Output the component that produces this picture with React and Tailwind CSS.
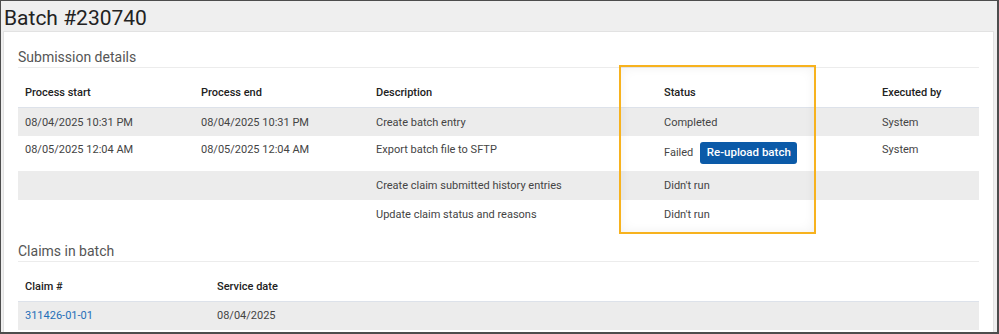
import React from 'react';

const steps = [
    { start: '08/04/2025 10:31 PM', end: '08/04/2025 10:31 PM', desc: 'Create batch entry', status: 'Completed', by: 'System' },
    { start: '08/05/2025 12:04 AM', end: '08/05/2025 12:04 AM', desc: 'Export batch file to SFTP', status: 'Failed', by: 'System', retry: true },
    { start: '', end: '', desc: 'Create claim submitted history entries', status: "Didn't run", by: '' },
    { start: '', end: '', desc: 'Update claim status and reasons', status: "Didn't run", by: '' },
];

function SectionTitle({ children }) {
    return (
        <div className="text-[14px] text-[#555] border-b border-[#ececec] pb-[2px] leading-[16px]">{children}</div>
    );
}

export default function App() {
    return (
        <div className="w-[999px] h-[334px] bg-[#efefef] border-l border-t border-r-2 border-b-2 border-[#4d4d4d] flex flex-col overflow-hidden font-['Roboto',sans-serif] text-[11px] text-[#444]">
            {/* Page header */}
            <div className="h-[30px] flex items-center pt-[4px] pl-[3px] text-[21px] text-[#222] leading-none">Batch #230740</div>

            {/* Card */}
            <div className="relative flex-1 ml-[2px] mr-[3px] bg-white border border-[#e2e2e2] border-b-0 px-[14px] pt-[17px]">
                <SectionTitle>Submission details</SectionTitle>

                <table className="w-full mt-[12px] border-collapse">
                    <thead>
                        <tr className="h-[27px] border-b border-[#dde2ea] text-[#222] text-left">
                            <th className="w-[176px] pl-[7px] font-medium">Process start</th>
                            <th className="w-[175px] pl-[7px] font-medium">Process end</th>
                            <th className="w-[288px] pl-[7px] font-medium">Description</th>
                            <th className="w-[218px] pl-[7px] font-medium">Status</th>
                            <th className="pl-[7px] font-medium">Executed by</th>
                        </tr>
                    </thead>
                    <tbody>
                        {steps.map((s, i) => (
                            <tr key={i} className={`${i % 2 === 0 ? 'bg-[#ececec]' : 'bg-white'} ${s.retry ? 'h-[35px]' : 'h-[29px]'} align-top`}>
                                <td className={`pl-[7px] ${s.retry ? 'pt-[6px]' : 'pt-[7px]'}`}>{s.start}</td>
                                <td className={`pl-[7px] ${s.retry ? 'pt-[6px]' : 'pt-[7px]'}`}>{s.end}</td>
                                <td className={`pl-[7px] ${s.retry ? 'pt-[6px]' : 'pt-[7px]'}`}>{s.desc}</td>
                                <td className={`pl-[7px] ${s.retry ? 'pt-[6px]' : 'pt-[7px]'}`}>
                                    {s.retry ? (
                                        <div className="flex items-center gap-[7px]">
                                            <span>Failed</span>
                                            <button className="h-[22px] w-[97px] rounded-[3px] bg-[#0b5aa8] text-white text-[11.5px] font-medium leading-none">
                                                Re-upload batch
                                            </button>
                                        </div>
                                    ) : (
                                        s.status
                                    )}
                                </td>
                                <td className={`pl-[7px] ${s.retry ? 'pt-[6px]' : 'pt-[7px]'}`}>{s.by}</td>
                            </tr>
                        ))}
                    </tbody>
                </table>

                <div className="mt-[14px]">
                    <SectionTitle>Claims in batch</SectionTitle>
                </div>

                <table className="w-full mt-[11px] border-collapse">
                    <thead>
                        <tr className="h-[28px] border-b border-[#dde2ea] text-[#222] text-left">
                            <th className="w-[192px] pl-[7px] font-medium">Claim #</th>
                            <th className="pl-[7px] font-medium">Service date</th>
                        </tr>
                    </thead>
                    <tbody>
                        <tr className="h-[29px] bg-[#ececec]">
                            <td className="pl-[7px]"><a className="text-[#1f6fb8]">311426-01-01</a></td>
                            <td className="pl-[7px]">08/04/2025</td>
                        </tr>
                    </tbody>
                </table>

                {/* Highlight overlay */}
                <div className="absolute left-[615px] top-[33px] w-[197px] h-[169px] border-2 border-[#f7b21e] shadow-[inset_0_0_12px_rgba(0,0,0,0.06)] pointer-events-none" />
            </div>
        </div>
    );
}
